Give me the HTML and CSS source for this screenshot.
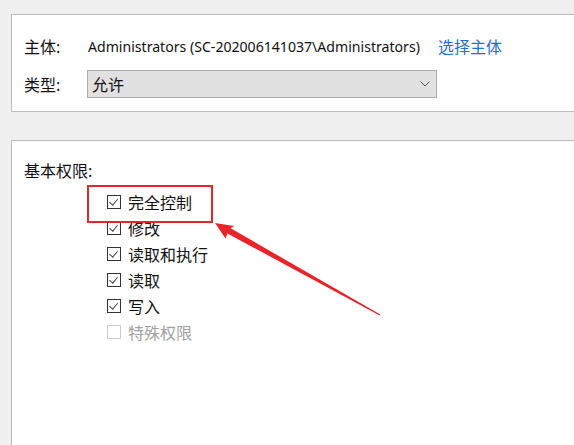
FILE: index.html
```html
<!DOCTYPE html>
<html lang="zh-CN">
<head>
    <meta charset="UTF-8">
    <title>权限项目</title>
    <link rel="stylesheet" href="styles.css">
</head>
<body>
    <div class="panel panel-top">
        <div class="row">
            <span class="label">主体:</span>
            <span class="value">Administrators (SC-202006141037\Administrators)</span>
            <a class="link" href="#">选择主体</a>
        </div>
        <div class="row">
            <span class="label">类型:</span>
            <div class="select">
                <span>允许</span>
                <svg class="chevron" width="10" height="6" viewBox="0 0 10 6">
                    <path d="M0.5 0.5 L5 5 L9.5 0.5" fill="none" stroke="#555" stroke-width="1"/>
                </svg>
            </div>
        </div>
    </div>

    <div class="panel panel-perms">
        <div class="perms-title">基本权限:</div>
        <ul class="perms">
            <li><span class="box checked"></span>完全控制</li>
            <li><span class="box checked"></span>修改</li>
            <li><span class="box checked"></span>读取和执行</li>
            <li><span class="box checked"></span>读取</li>
            <li><span class="box checked"></span>写入</li>
            <li class="disabled"><span class="box"></span>特殊权限</li>
        </ul>
    </div>

    <!-- annotation drawn over the screenshot -->
    <svg class="annotation" width="574" height="445" viewBox="0 0 574 445">
        <rect x="88" y="186" width="124" height="36" fill="none" stroke="#e3262b" stroke-width="2"/>
        <polygon fill="#e8242a" points="215,223 234,226 230.6,228.2 380.3,314.5 379.7,315.5 227.4,233.5 225.5,238.5"/>
    </svg>
</body>
</html>
```

FILE: styles.css
```css
body {
    margin: 0;
    background: #f0f0f0;
    font-family: "Noto Sans", "Noto Sans CJK SC", sans-serif;
    font-size: 16px;
    color: #111;
    overflow: hidden;
    height: 445px;
    position: relative;
}

.panel {
    background: #fff;
    border: 1px solid #bcbcbc;
    margin-left: 11px;
    margin-right: -10px;
    padding-left: 12px;
    box-sizing: border-box;
}

/* top box: subject and type */
.panel-top {
    margin-top: 14px;
    padding-top: 19px;
    padding-bottom: 13px;
    display: flex;
    flex-direction: column;
    gap: 12px;
}

.row {
    display: flex;
    align-items: center;
    height: 24px;
}

.row:last-child {
    height: 28px;
}

.label {
    width: 63px;
    flex: none;
}

.value {
    margin-left: 1px;
    white-space: nowrap;
    font-size: 14.1px;
}

.link {
    margin-left: 18px;
    color: #1f6fce;
    text-decoration: none;
    white-space: nowrap;
}

.select {
    height: 26px;
    border: 1px solid #adadad;
    background: #e1e1e1;
    display: flex;
    align-items: center;
    justify-content: space-between;
    padding: 0 6px 0 4px;
    width: 338px;
}

.chevron {
    display: block;
}

/* permissions box */
.panel-perms {
    margin-top: 28px;
    padding-top: 20px;
    height: 320px;
}

.perms-title {
    line-height: 20px;
}

.perms {
    list-style: none;
    margin: 8px 0 0 83px;
    padding: 0;
}

.perms li {
    display: flex;
    align-items: center;
    height: 26px;
}

.box {
    width: 12px;
    height: 12px;
    border: 1px solid #333;
    margin-right: 7px;
    position: relative;
    flex: none;
}

.box.checked::after {
    content: "";
    position: absolute;
    left: 3px;
    top: 1px;
    width: 4px;
    height: 7px;
    border-right: 1px solid #444;
    border-bottom: 1px solid #444;
    transform: rotate(40deg);
}

.perms li.disabled {
    color: #a0a0a0;
}

.perms li.disabled .box {
    border-color: #cccccc;
}

.annotation {
    position: absolute;
    left: 0;
    top: 0;
    pointer-events: none;
}
```
